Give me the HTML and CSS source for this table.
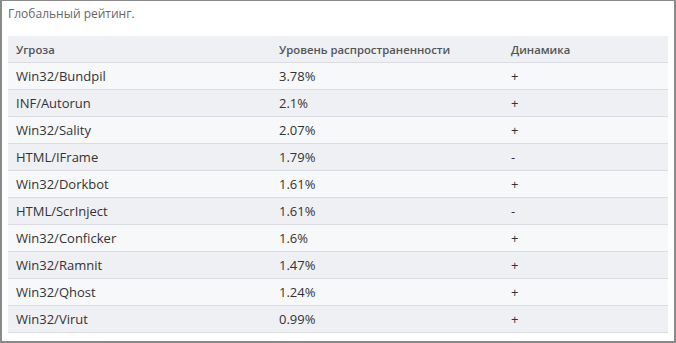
FILE: index.html
```html
<!DOCTYPE html>
<html lang="ru">
<head>
<meta charset="utf-8">
<link rel="stylesheet" href="styles.css">
</head>
<body>
<div class="frame">
  <div class="title">Глобальный рейтинг.</div>
  <table class="rating">
    <thead>
      <tr><th class="c1">Угроза</th><th class="c2">Уровень распространенности</th><th class="c3">Динамика</th></tr>
    </thead>
    <tbody>
      <tr><td>Win32/Bundpil</td><td>3.78%</td><td>+</td></tr>
      <tr><td>INF/Autorun</td><td>2.1%</td><td>+</td></tr>
      <tr><td>Win32/Sality</td><td>2.07%</td><td>+</td></tr>
      <tr><td>HTML/IFrame</td><td>1.79%</td><td>-</td></tr>
      <tr><td>Win32/Dorkbot</td><td>1.61%</td><td>+</td></tr>
      <tr><td>HTML/ScrInject</td><td>1.61%</td><td>-</td></tr>
      <tr><td>Win32/Conficker</td><td>1.6%</td><td>+</td></tr>
      <tr><td>Win32/Ramnit</td><td>1.47%</td><td>+</td></tr>
      <tr><td>Win32/Qhost</td><td>1.24%</td><td>+</td></tr>
      <tr><td>Win32/Virut</td><td>0.99%</td><td>+</td></tr>
    </tbody>
  </table>
</div>
</body>
</html>
```
FILE: styles.css
```css
html, body {
  margin: 0;
  padding: 0;
  background: #ffffff;
}
.frame {
  box-sizing: border-box;
  width: 676px;
  height: 343px;
  border: 1px solid #8a8a8a;
  border-left-width: 2px;
  border-right-width: 2px;
  border-bottom-width: 2px;
  padding: 4px 6px 0 6px;
  font-family: "Open Sans", "Noto Sans", sans-serif;
  font-size: 13px;
  color: #333;
}
.title {
  font-size: 12px;
  color: #666;
  height: 31px;
  line-height: 18px;
}
.rating {
  width: 660px;
  border-collapse: collapse;
  table-layout: fixed;
}
.rating th, .rating td {
  text-align: left;
  padding: 0 8px;
  height: 26px;
  border-bottom: 1px solid #dadce2;
  white-space: nowrap;
}
.rating th {
  font-size: 11.3px;
  font-weight: 600;
  color: #555;
  background: #eef0f4;
}
.rating .c1 { width: 247px; }
.rating .c2 { width: 216px; }
.rating tbody tr:nth-child(odd) td { background: #f7f8fa; }
.rating tbody tr:nth-child(even) td { background: #eff0f4; }
```
